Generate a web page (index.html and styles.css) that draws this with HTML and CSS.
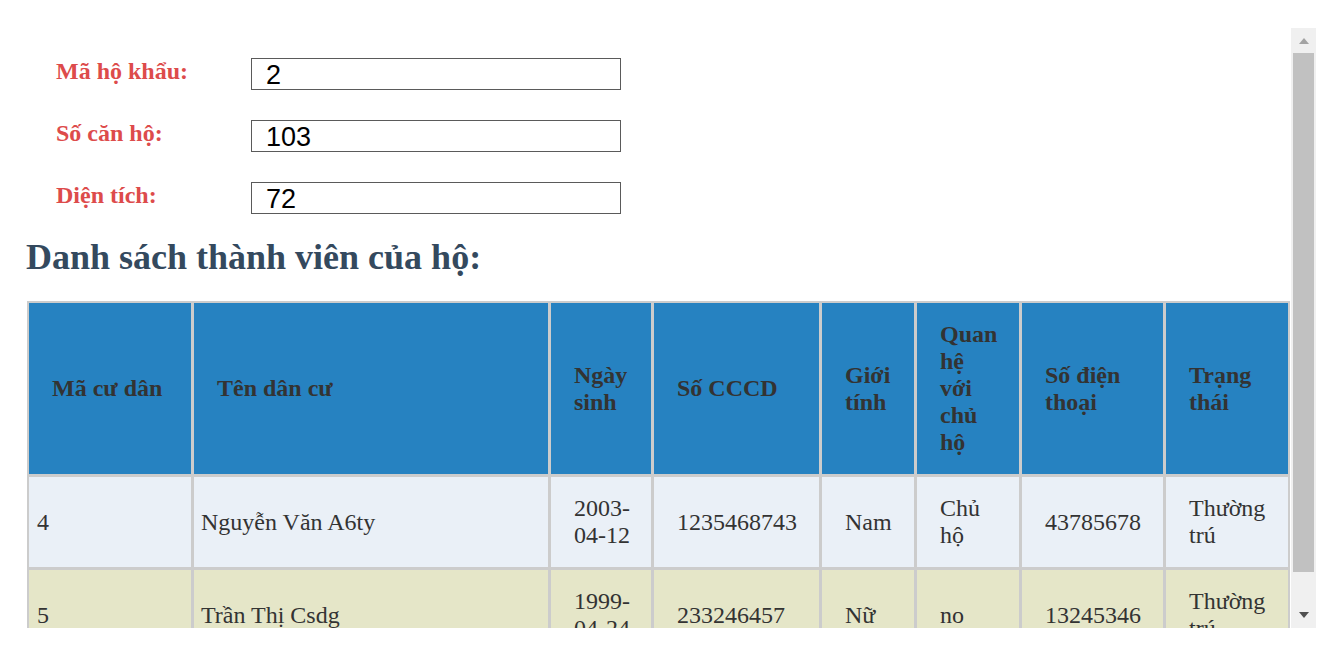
FILE: index.html
```html
<!DOCTYPE html>
<html lang="vi">
<head>
<meta charset="utf-8">
<title>Hộ khẩu</title>
<link rel="stylesheet" href="styles.css">
</head>
<body>
<div class="page">
  <div class="scroller">
    <div class="viewport">
      <div class="form">
        <div class="field">
          <label class="label">Mã hộ khẩu:</label>
          <input class="input" type="text" value="2">
        </div>
        <div class="field">
          <label class="label">Số căn hộ:</label>
          <input class="input" type="text" value="103">
        </div>
        <div class="field">
          <label class="label">Diện tích:</label>
          <input class="input" type="text" value="72">
        </div>
      </div>
      <h2 class="title">Danh sách thành viên của hộ:</h2>
      <table class="members">
        <colgroup>
          <col class="c1"><col class="c2"><col class="c3"><col class="c4">
          <col class="c5"><col class="c6"><col class="c7"><col class="c8">
        </colgroup>
        <thead>
          <tr>
            <th>Mã cư dân</th>
            <th>Tên dân cư</th>
            <th>Ngày sinh</th>
            <th>Số CCCD</th>
            <th>Giới tính</th>
            <th>Quan hệ với chủ hộ</th>
            <th>Số điện thoại</th>
            <th>Trạng thái</th>
          </tr>
        </thead>
        <tbody>
          <tr class="odd">
            <td class="id">4</td>
            <td class="name">Nguyễn Văn A6ty</td>
            <td>2003-04-12</td>
            <td>1235468743</td>
            <td>Nam</td>
            <td>Chủ hộ</td>
            <td>43785678</td>
            <td>Thường trú</td>
          </tr>
          <tr class="even">
            <td class="id">5</td>
            <td class="name">Trần Thị Csdg</td>
            <td>1999-04-24</td>
            <td>233246457</td>
            <td>Nữ</td>
            <td>no</td>
            <td>13245346</td>
            <td>Thường trú</td>
          </tr>
        </tbody>
      </table>
    </div>
    <div class="scrollbar">
      <div class="sb-btn"><span class="arrow-up"></span></div>
      <div class="sb-track"><div class="sb-thumb"></div></div>
      <div class="sb-btn"><span class="arrow-down"></span></div>
    </div>
  </div>
</div>
</body>
</html>
```

FILE: styles.css
```css
html, body {
  margin: 0;
  padding: 0;
  background: #fff;
}
body {
  font-family: "Liberation Serif", "Times New Roman", serif;
  color: #333;
}
.page {
  padding-top: 28px;
  height: 626px;
}
.scroller {
  display: flex;
  width: 1316px;
  height: 600px;
  overflow: hidden;
}
.viewport {
  width: 1291px;
  flex: none;
  overflow: hidden;
  padding-top: 30px;
  box-sizing: border-box;
}
.scrollbar {
  width: 25px;
  flex: none;
  display: flex;
  flex-direction: column;
  background: #f0f0f0;
}
.sb-btn {
  height: 25px;
  flex: none;
  display: flex;
  align-items: center;
  justify-content: center;
}
.arrow-up {
  width: 0;
  height: 0;
  border-left: 5.5px solid transparent;
  border-right: 5.5px solid transparent;
  border-bottom: 6px solid #a3a3a3;
}
.arrow-down {
  width: 0;
  height: 0;
  margin-top: -2px;
  border-left: 5.5px solid transparent;
  border-right: 5.5px solid transparent;
  border-top: 6px solid #505050;
}
.sb-track {
  flex: 1;
}
.sb-thumb {
  height: 519px;
  margin: 0 2px;
  background: #c1c1c1;
}
.form {
  padding-left: 56px;
}
.field {
  display: flex;
  align-items: flex-start;
  height: 32px;
  margin-bottom: 30px;
}
.field:last-child {
  margin-bottom: 0;
}
.label {
  width: 195px;
  flex: none;
  font-size: 24px;
  line-height: 27px;
  padding-top: 0;
  font-weight: bold;
  color: #dd4b4b;
}
.input {
  box-sizing: border-box;
  width: 370px;
  height: 32px;
  margin: 0;
  padding: 2px 14px 0;
  border: 1px solid #5a5a5a;
  border-radius: 0;
  font-family: "Liberation Sans", Arial, sans-serif;
  font-size: 27px;
  color: #000;
  background: #fff;
  outline: none;
}
.title {
  margin: 23px 0 23px 26px;
  font-size: 36px;
  font-weight: bold;
  color: #34495e;
  line-height: 41px;
}
.members {
  margin-left: 27px;
  width: 1263px;
  table-layout: fixed;
  border-collapse: separate;
  border-spacing: 0;
  border-top: 2px solid #ccc;
  border-left: 2px solid #ccc;
  font-size: 24px;
  line-height: 27px;
}
.c1 { width: 165px; }
.c2 { width: 357px; }
.c3 { width: 103px; }
.c4 { width: 168px; }
.c5 { width: 95px; }
.c6 { width: 105px; }
.c7 { width: 144px; }
.c8 { width: 124px; }
.members th,
.members td {
  border-right: 3px solid #ccc;
  border-bottom: 3px solid #ccc;
  padding: 18px 20px 18px 23px;
  text-align: left;
  vertical-align: middle;
  color: #333;
}
.members th:last-child,
.members td:last-child {
  border-right-width: 2px;
}
.members th {
  background: #2682c1;
  font-weight: bold;
}
.members td {
  font-weight: normal;
}
.members td.id {
  padding-left: 8px;
}
.members td.name {
  padding-left: 7px;
}
.odd td {
  background: #eaf0f7;
}
.even td {
  background: #e5e6c8;
}
```
